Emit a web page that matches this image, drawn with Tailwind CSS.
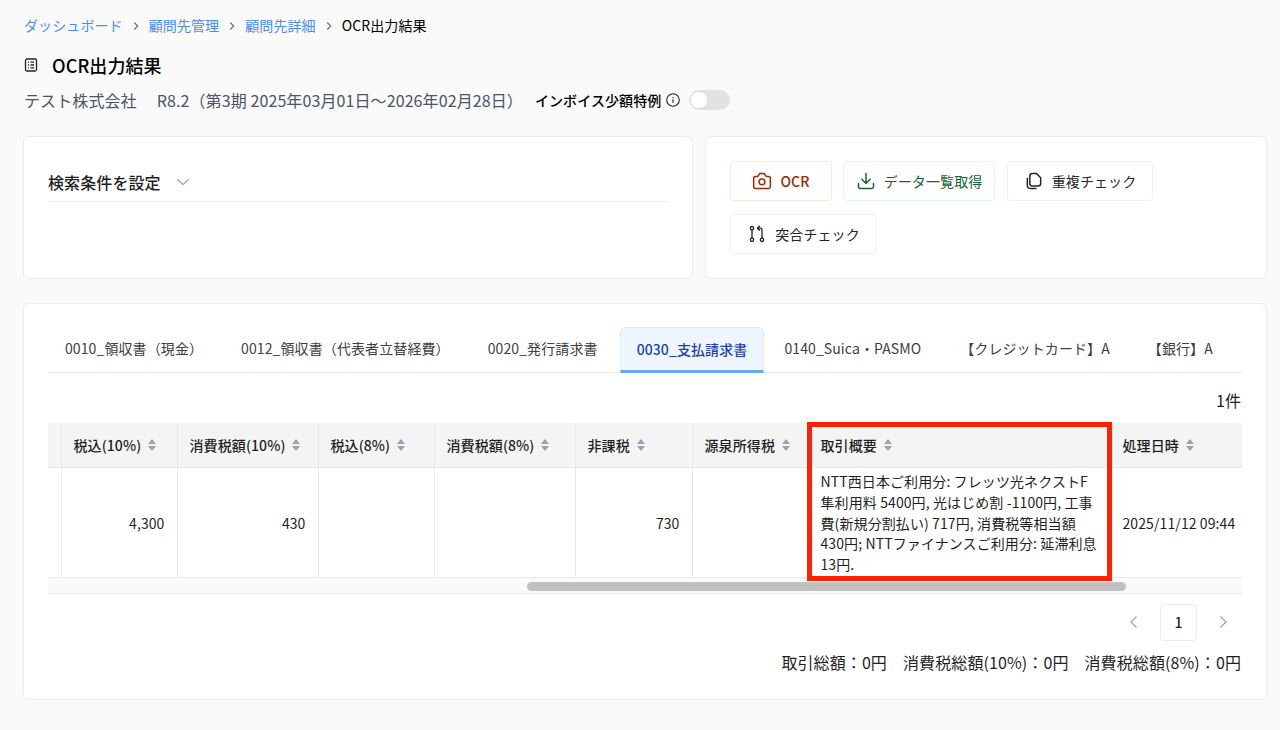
<!DOCTYPE html>
<html lang="ja">
<head>
<meta charset="UTF-8">
<title>OCR出力結果</title>
<script src="https://cdn.jsdelivr.net/npm/@tailwindcss/browser@4"></script>
</head>
<body class="bg-[#fafafa] font-['Noto_Sans_CJK_JP','Noto_Sans',sans-serif] text-sm tracking-[0.1px] text-[#1f1f1f]">
<div class="relative w-[1280px] h-[730px] overflow-hidden pl-[23px] pr-[13px] pt-[15px]">

  <!-- breadcrumb -->
  <nav class="flex items-center h-[21px] leading-[21px] pl-px">
    <span class="text-[#4b8df0]">ダッシュボード</span>
    <svg class="w-[14px] h-[14px] mx-[6px] text-gray-500" viewBox="0 0 24 24" fill="none" stroke="currentColor" stroke-width="2"><path d="M9 6l6 6-6 6"/></svg>
    <span class="text-[#4b8df0]">顧問先管理</span>
    <svg class="w-[14px] h-[14px] mx-[6px] text-gray-500" viewBox="0 0 24 24" fill="none" stroke="currentColor" stroke-width="2"><path d="M9 6l6 6-6 6"/></svg>
    <span class="text-[#4b8df0]">顧問先詳細</span>
    <svg class="w-[14px] h-[14px] mx-[6px] text-gray-500" viewBox="0 0 24 24" fill="none" stroke="currentColor" stroke-width="2"><path d="M9 6l6 6-6 6"/></svg>
    <span class="text-black">OCR出力結果</span>
  </nav>

  <!-- title -->
  <div class="flex items-center mt-[15px] h-[27px] pl-px">
    <svg class="w-[14px] h-[14px] mr-[14px]" viewBox="0 0 14 14" fill="none" stroke="#222" stroke-width="1.3"><rect x="1.5" y="1" width="11" height="12" rx="1.5"/><path d="M4 4.2h1M6.5 4.2H10M4 7h1M6.5 7H10M4 9.8h1M6.5 9.8H10"/></svg>
    <h1 class="text-lg font-medium text-black">OCR出力結果</h1>
  </div>

  <!-- sub title -->
  <div class="flex items-center mt-[10px] h-[24px] pl-px">
    <span class="text-base text-gray-600">テスト株式会社</span>
    <span class="text-base text-gray-600 ml-[20px]">R8.2（第3期 2025年03月01日～2026年02月28日）</span>
    <span class="text-sm font-medium text-black ml-[12px]">インボイス少額特例</span>
    <svg class="w-[16px] h-[16px] ml-[4px]" viewBox="0 0 16 16" fill="none" stroke="#222" stroke-width="1.1"><circle cx="8" cy="8" r="6.3"/><path d="M8 7.2v3.6M8 5v1"/></svg>
    <div class="w-[41px] h-[20px] rounded-full bg-[#e2e2e4] ml-[8px] p-[2px]">
      <div class="w-[16px] h-[16px] rounded-full bg-white"></div>
    </div>
  </div>

  <!-- top cards -->
  <div class="flex gap-3 mt-[24px]">
    <div class="w-[670px] h-[143px] bg-white border border-[#ececec] rounded-md px-6 pt-[29px]">
      <div class="flex items-center h-[36px] border-b border-[#ececec] pb-[3px]">
        <span class="text-base font-medium text-[#1f1f1f]">検索条件を設定</span>
        <svg class="w-[16px] h-[16px] ml-[14px] text-gray-400" viewBox="0 0 16 16" fill="none" stroke="currentColor" stroke-width="1.2"><path d="M2.5 5.5L8 10.5l5.5-5"/></svg>
      </div>
    </div>
    <div class="w-[562px] h-[143px] bg-white border border-[#ececec] rounded-md px-6 pt-6">
      <div class="flex flex-wrap gap-x-[11px] gap-y-[13px]">
        <button class="w-[102px] h-[40px] flex items-center justify-center gap-2 bg-white border border-[#fde8d8] rounded text-[#9a2a0a] font-medium">
          <svg class="w-[20px] h-[20px]" viewBox="0 0 24 24" fill="none" stroke="currentColor" stroke-width="1.8" stroke-linejoin="round"><path d="M14.5 3h-5L7 6.5H4a2 2 0 0 0-2 2V19a2 2 0 0 0 2 2h16a2 2 0 0 0 2-2V8.500a2 2 0 0 0-2-2h-3z"/><circle cx="12" cy="13" r="3.500"/></svg>
          OCR
        </button>
        <button class="w-[152px] h-[40px] flex items-center justify-center gap-2 bg-white border border-[#dcfce7] rounded text-[#166534] font-normal">
          <svg class="w-[20px] h-[20px]" viewBox="0 0 24 24" fill="none" stroke="currentColor" stroke-width="1.8" stroke-linecap="round" stroke-linejoin="round"><path d="M21 15v4a2 2 0 0 1-2 2H5a2 2 0 0 1-2-2v-4M7 10l5 5 5-5M12 15V3"/></svg>
          データ一覧取得
        </button>
        <button class="w-[146px] h-[40px] ml-px flex items-center justify-center gap-2 bg-white border border-[#f0f0f0] rounded text-[#262626] font-normal">
          <svg class="w-[20px] h-[20px]" viewBox="0 0 24 24" fill="none" stroke="currentColor" stroke-width="1.8" stroke-linejoin="round"><path d="M10 3h5l5 5v7a3 3 0 0 1-3 3h-7a3 3 0 0 1-3-3V6a3 3 0 0 1 3-3z"/><path d="M4 8v9a4 4 0 0 0 4 4h7"/></svg>
          重複チェック
        </button>
        <button class="w-[147px] h-[40px] flex items-center justify-center gap-2 bg-white border border-[#f0f0f0] rounded text-[#262626] font-normal">
          <svg class="w-[20px] h-[20px]" viewBox="0 0 24 24" fill="none" stroke="currentColor" stroke-width="1.6" stroke-linecap="round" stroke-linejoin="round"><circle cx="6" cy="5" r="2"/><circle cx="6" cy="19" r="2"/><circle cx="18" cy="19" r="2"/><path d="M6 7v10M18 17V7a2 2 0 0 0-2-2h-3M15 2.5L12.500 5 15 7.500"/></svg>
          突合チェック
        </button>
      </div>
    </div>
  </div>

  <!-- list card -->
  <div class="w-[1244px] h-[397px] mt-[24px] bg-white border border-[#ececec] rounded-md px-6 pt-[23px]">
    <div class="flex gap-1 h-[46px] border-b border-[#ececec] text-[#404040] whitespace-nowrap">
      <div class="h-[45px] px-[17px] leading-[42px]">0010_領収書（現金）</div>
      <div class="h-[45px] px-[17px] leading-[42px]">0012_領収書（代表者立替経費）</div>
      <div class="h-[45px] px-[17px] leading-[42px] mr-px">0020_発行請求書</div>
      <div class="h-[46px] px-[16px] leading-[42px] bg-[#eff6ff] border border-[#dbeafe] border-b-[3px] border-b-[#6ca6f0] rounded-t-md text-[#1e40af] font-medium">0030_支払請求書</div>
      <div class="h-[45px] pl-4 pr-[18px] leading-[42px]">0140_Suica・PASMO</div>
      <div class="h-[45px] px-[17px] leading-[42px]">【クレジットカード】A</div>
      <div class="h-[45px] px-[17px] leading-[42px]">【銀行】A</div>
    </div>

    <div class="text-right text-base leading-[22px] mt-[16px] pr-px text-[#1f1f1f]">1件</div>

    <div class="w-[1194px] overflow-hidden mt-[12px]">
      <table class="table-fixed w-[1320px] border-collapse text-[#1f1f1f]">
        <thead>
          <tr class="h-[44px] bg-[#f4f4f4] border-b border-[#e8e8e8] text-left font-medium">
            <th class="w-[13px] border-r border-[#e8e8e8]"></th>
            <th class="w-[116px] border-r border-[#e8e8e8] px-3 font-medium"><div class="flex items-center gap-[6px]">税込(10%)<svg class="w-[10px] h-[14px] text-gray-400" viewBox="0 0 10 14" fill="currentColor"><path d="M5 1l4 5H1zM5 13l4-5H1z"/></svg></div></th>
            <th class="w-[141px] border-r border-[#e8e8e8] px-3 font-medium"><div class="flex items-center gap-[6px]">消費税額(10%)<svg class="w-[10px] h-[14px] text-gray-400" viewBox="0 0 10 14" fill="currentColor"><path d="M5 1l4 5H1zM5 13l4-5H1z"/></svg></div></th>
            <th class="w-[116px] border-r border-[#e8e8e8] px-3 font-medium"><div class="flex items-center gap-[6px]">税込(8%)<svg class="w-[10px] h-[14px] text-gray-400" viewBox="0 0 10 14" fill="currentColor"><path d="M5 1l4 5H1zM5 13l4-5H1z"/></svg></div></th>
            <th class="w-[141px] border-r border-[#e8e8e8] px-3 font-medium"><div class="flex items-center gap-[6px]">消費税額(8%)<svg class="w-[10px] h-[14px] text-gray-400" viewBox="0 0 10 14" fill="currentColor"><path d="M5 1l4 5H1zM5 13l4-5H1z"/></svg></div></th>
            <th class="w-[117px] border-r border-[#e8e8e8] px-3 font-medium"><div class="flex items-center gap-[6px]">非課税<svg class="w-[10px] h-[14px] text-gray-400" viewBox="0 0 10 14" fill="currentColor"><path d="M5 1l4 5H1zM5 13l4-5H1z"/></svg></div></th>
            <th class="w-[116px] border-r border-[#e8e8e8] px-3 font-medium"><div class="flex items-center gap-[6px]">源泉所得税<svg class="w-[10px] h-[14px] text-gray-400" viewBox="0 0 10 14" fill="currentColor"><path d="M5 1l4 5H1zM5 13l4-5H1z"/></svg></div></th>
            <th class="w-[302px] border-r border-[#e8e8e8] px-3 font-medium"><div class="flex items-center gap-[6px]">取引概要<svg class="w-[10px] h-[14px] text-gray-400" viewBox="0 0 10 14" fill="currentColor"><path d="M5 1l4 5H1zM5 13l4-5H1z"/></svg></div></th>
            <th class="px-3 font-medium"><div class="flex items-center gap-[6px]">処理日時<svg class="w-[10px] h-[14px] text-gray-400" viewBox="0 0 10 14" fill="currentColor"><path d="M5 1l4 5H1zM5 13l4-5H1z"/></svg></div></th>
          </tr>
        </thead>
        <tbody>
          <tr class="h-[110px] border-b border-[#e8e8e8]">
            <td class="border-r border-[#e8e8e8]"></td>
            <td class="border-r border-[#e8e8e8] px-3 pt-[2px] text-right">4,300</td>
            <td class="border-r border-[#e8e8e8] px-3 pt-[2px] text-right">430</td>
            <td class="border-r border-[#e8e8e8] px-3"></td>
            <td class="border-r border-[#e8e8e8] px-3"></td>
            <td class="border-r border-[#e8e8e8] px-3 pt-[2px] text-right">730</td>
            <td class="border-r border-[#e8e8e8] px-3"></td>
            <td class="border-r border-[#e8e8e8] px-3 pt-[2px] leading-[20.8px]">NTT西日本ご利用分: フレッツ光ネクストF隼利用料 5400円, 光はじめ割 -1100円, 工事費(新規分割払い) 717円, 消費税等相当額 430円; NTTファイナンスご利用分: 延滞利息 13円.</td>
            <td class="px-3 pt-[2px] whitespace-nowrap">2025/11/12 09:44</td>
          </tr>
        </tbody>
      </table>
      <!-- scrollbar -->
      <div class="h-[16px] bg-[#fafafa] border-b border-[#ececec] pt-[4px]">
        <div class="w-[599px] h-[9px] ml-[479px] rounded-full bg-[#c1c1c1]"></div>
      </div>
    </div>

    <!-- pagination -->
    <div class="flex items-center justify-end mt-[10px] pr-[11px]">
      <svg class="w-[16px] h-[16px] text-gray-400" viewBox="0 0 16 16" fill="none" stroke="currentColor" stroke-width="1.2"><path d="M10.5 2.5L5 8l5.5 5.5"/></svg>
      <div class="w-[37px] h-[37px] mx-[18px] border border-[#ececec] rounded flex items-center justify-center font-medium text-[#1f1f1f]">1</div>
      <svg class="w-[16px] h-[16px] text-gray-400" viewBox="0 0 16 16" fill="none" stroke="currentColor" stroke-width="1.2"><path d="M5.5 2.5L11 8l-5.5 5.5"/></svg>
    </div>

    <!-- totals -->
    <div class="flex justify-end gap-4 mt-[9px] text-base leading-[24px] text-[#1f1f1f] pr-px">
      <span>取引総額：0円</span>
      <span>消費税総額(10%)：0円</span>
      <span>消費税総額(8%)：0円</span>
    </div>
  </div>

  <!-- highlight -->
  <div class="absolute left-[807px] top-[422px] w-[305px] h-[159px] border-[5px] border-[#ff2200] pointer-events-none"></div>
</div>
</body>
</html>
